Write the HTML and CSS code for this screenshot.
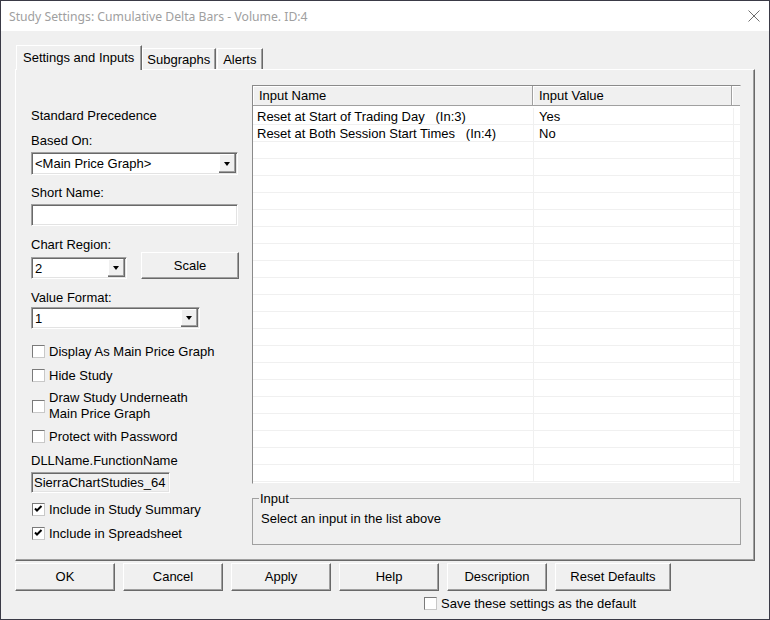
FILE: index.html
```html
<!DOCTYPE html>
<html lang="en">
<head>
  <meta charset="UTF-8">
  <meta name="viewport" content="width=device-width, initial-scale=1.0">
  <title>Study Settings</title>
  <link rel="stylesheet" href="styles.css">
</head>
<body>

<div class="window">
  <div class="titlebar">
    <span class="title">Study Settings: Cumulative Delta Bars - Volume. ID:4</span>
    <svg class="close" width="12" height="12" viewBox="0 0 12 12" aria-label="Close">
      <path d="M0.5 0.5L11.5 11.5M11.5 0.5L0.5 11.5" stroke="#6e6e6e" stroke-width="1" fill="none"/>
    </svg>
  </div>

  <div class="tabs">
    <div class="tab active">Settings and Inputs</div>
    <div class="tab">Subgraphs</div>
    <div class="tab last">Alerts</div>
  </div>

  <div class="panel">
    <div class="left">
      <div class="text">Standard Precedence</div>

      <div class="text label">Based On:</div>
      <div class="combo based">
        <span class="combo-text">&lt;Main Price Graph&gt;</span>
        <span class="combo-btn"><span class="arrow"></span></span>
      </div>

      <div class="text label">Short Name:</div>
      <div class="edit"></div>

      <div class="text label">Chart Region:</div>
      <div class="region-row">
        <div class="combo region">
          <span class="combo-text">2</span>
          <span class="combo-btn"><span class="arrow"></span></span>
        </div>
        <button class="btn scale">Scale</button>
      </div>

      <div class="text label label-wide">Value Format:</div>
      <div class="combo format">
        <span class="combo-text">1</span>
        <span class="combo-btn"><span class="arrow"></span></span>
      </div>

      <label class="check first"><span class="box"></span>Display As Main Price Graph</label>
      <label class="check"><span class="box"></span>Hide Study</label>
      <label class="check two-line"><span class="box"></span><span>Draw Study Underneath<br>Main Price Graph</span></label>
      <label class="check protect"><span class="box"></span>Protect with Password</label>

      <div class="text label dll">DLLName.FunctionName</div>
      <div class="edit readonly">SierraChartStudies_64</div>

      <label class="check">
        <span class="box"><svg width="11" height="11" viewBox="0 0 11 11"><path d="M2 4.5L4 6.5L8.5 2" stroke="#000" stroke-width="2" fill="none"/></svg></span>Include in Study Summary
      </label>
      <label class="check">
        <span class="box"><svg width="11" height="11" viewBox="0 0 11 11"><path d="M2 4.5L4 6.5L8.5 2" stroke="#000" stroke-width="2" fill="none"/></svg></span>Include in Spreadsheet
      </label>
    </div>

    <div class="right">
      <div class="list">
        <div class="list-head">
          <div class="hcell h-name">Input Name</div>
          <div class="hcell h-value">Input Value</div>
          <div class="hcell h-fill"></div>
        </div>
        <div class="rows">
          <div class="row"><div class="c-name">Reset at Start of Trading Day   (In:3)</div><div class="c-value">Yes</div></div>
          <div class="row"><div class="c-name">Reset at Both Session Start Times   (In:4)</div><div class="c-value">No</div></div>
          <div class="row"><div class="c-name"></div><div class="c-value"></div></div>
          <div class="row"><div class="c-name"></div><div class="c-value"></div></div>
          <div class="row"><div class="c-name"></div><div class="c-value"></div></div>
          <div class="row"><div class="c-name"></div><div class="c-value"></div></div>
          <div class="row"><div class="c-name"></div><div class="c-value"></div></div>
          <div class="row"><div class="c-name"></div><div class="c-value"></div></div>
          <div class="row"><div class="c-name"></div><div class="c-value"></div></div>
          <div class="row"><div class="c-name"></div><div class="c-value"></div></div>
          <div class="row"><div class="c-name"></div><div class="c-value"></div></div>
          <div class="row"><div class="c-name"></div><div class="c-value"></div></div>
          <div class="row"><div class="c-name"></div><div class="c-value"></div></div>
          <div class="row"><div class="c-name"></div><div class="c-value"></div></div>
          <div class="row"><div class="c-name"></div><div class="c-value"></div></div>
          <div class="row"><div class="c-name"></div><div class="c-value"></div></div>
          <div class="row"><div class="c-name"></div><div class="c-value"></div></div>
          <div class="row"><div class="c-name"></div><div class="c-value"></div></div>
          <div class="row"><div class="c-name"></div><div class="c-value"></div></div>
          <div class="row"><div class="c-name"></div><div class="c-value"></div></div>
          <div class="row"><div class="c-name"></div><div class="c-value"></div></div>
          <div class="row"><div class="c-name"></div><div class="c-value"></div></div>
        </div>
      </div>

      <fieldset class="group">
        <legend>Input</legend>
        <div>Select an input in the list above</div>
      </fieldset>
    </div>
  </div>

  <div class="buttons">
    <button class="btn">OK</button>
    <button class="btn">Cancel</button>
    <button class="btn">Apply</button>
    <button class="btn">Help</button>
    <button class="btn">Description</button>
    <button class="btn reset">Reset Defaults</button>
  </div>

  <label class="check save"><span class="box"></span>Save these settings as the default</label>
</div>

</body>
</html>
```

FILE: styles.css
```css
body {
  margin: 0;
  background-color: #f0f0f0;
  font-family: "Liberation Sans", Arial, sans-serif;
  font-size: 13px;
  line-height: 15px;
  color: #000;
}
.window {
  width: 770px;
  height: 620px;
  box-sizing: border-box;
  border: 1px solid #3a3a46;
  background-color: #f0f0f0;
  overflow: hidden;
}
.titlebar {
  height: 30px;
  background-color: #fff;
  display: flex;
  align-items: center;
  padding: 0 9px 0 8px;
}
.title {
  flex: 1;
  font-family: "Noto Sans", sans-serif;
  font-size: 12.2px;
  color: #a0a0a0;
}

/* tabs */
.tabs {
  display: flex;
  align-items: flex-end;
  height: 24px;
  margin: 14px 0 0 15px;
}
.tab {
  height: 20px;
  line-height: 21px;
  padding: 0 5px 0 4px;
  border: 1px solid;
  border-color: #fff #696969 transparent #fff;
  border-bottom: none;
  box-shadow: inset -1px 0 0 #a0a0a0;
}
.tab.last {
  margin-left: 1px;
  padding: 0 6px 0 5px;
}
.tab.active {
  position: relative;
  z-index: 1;
  height: 24px;
  line-height: 23px;
  padding: 0 7px 0 6px;
  margin-bottom: -1px;
  background-color: #f0f0f0;
}

/* main panel */
.panel {
  display: flex;
  width: 740px;
  height: 492px;
  box-sizing: border-box;
  margin-left: 14px;
  padding: 0 13px 0 15px;
  border: 1px solid;
  border-color: #fff #696969 #696969 #fff;
  box-shadow: inset -1px -1px 0 #a0a0a0;
}
.left {
  width: 208px;
  padding-top: 38px;
}
.right {
  width: 489px;
  margin-left: 13px;
  padding-top: 15px;
}

.label {
  margin-top: 10px;
}
.label + .edit,
.label + .combo {
  margin-top: 4px;
}
.combo + .label {
  margin-top: 10px;
}
.edit + .label {
  margin-top: 11px;
}
.label-wide {
  margin-top: 11px;
}
.label-wide + .combo {
  margin-top: 2px;
}

/* sunken controls */
.combo,
.edit {
  box-sizing: border-box;
  background-color: #fff;
  border: 1px solid;
  border-color: #a0a0a0 #fff #fff #a0a0a0;
  box-shadow: inset 1px 1px 0 #696969, inset -1px -1px 0 #e3e3e3;
}
.combo {
  display: flex;
  align-items: center;
  height: 22px;
}
.combo.based {
  width: 207px;
  height: 23px;
}
.combo.region {
  width: 96px;
}
.combo.format {
  width: 169px;
}
.combo-text {
  flex: 1;
  padding-left: 3px;
}
.combo-btn {
  align-self: stretch;
  width: 16px;
  margin: 1px 1px 1px 0;
  display: flex;
  align-items: center;
  justify-content: center;
  background-color: #f0f0f0;
  border-right: 1px solid #696969;
  border-bottom: 1px solid #696969;
  box-shadow: inset -1px -1px 0 #a0a0a0, inset 1px 1px 0 #fff;
}
.arrow {
  width: 0;
  height: 0;
  border-left: 3.5px solid transparent;
  border-right: 3.5px solid transparent;
  border-top: 4px solid #000;
  margin-top: 1px;
}
.edit {
  width: 207px;
  height: 22px;
}
.edit.readonly {
  width: 139px;
  height: 21px;
  background-color: #f0f0f0;
  padding-left: 2px;
  line-height: 19px;
  white-space: nowrap;
  overflow: hidden;
}
.label.dll {
  margin-top: 9px;
}

.region-row {
  display: flex;
  align-items: flex-end;
  justify-content: space-between;
  width: 208px;
}

/* raised buttons */
.btn {
  font-family: inherit;
  font-size: inherit;
  color: #000;
  width: 100px;
  height: 28px;
  padding: 0 0 1px;
  background-color: #f0f0f0;
  border: 1px solid;
  border-color: #fff #696969 #696969 #fff;
  box-shadow: inset -1px -1px 0 #a0a0a0;
}
.btn.scale {
  width: 98px;
  height: 27px;
}
.btn.reset {
  width: 116px;
}

/* checkboxes */
.check {
  display: flex;
  align-items: center;
  gap: 4px;
  margin-top: 9px;
  white-space: nowrap;
}
.check.first {
  margin-top: 15px;
}
.check.two-line {
  margin-top: 7px;
  line-height: 16px;
}
.check.protect {
  margin-top: 7px;
}
.box {
  flex: none;
  width: 13px;
  height: 13px;
  box-sizing: border-box;
  margin-left: 1px;
  background-color: #fff;
  border: 1px solid;
  border-color: #7a7a7a #c8c8c8 #c8c8c8 #7a7a7a;
  display: flex;
  align-items: center;
  justify-content: center;
}

/* input list */
.list {
  height: 399px;
  box-sizing: border-box;
  background-color: #fff;
  border: 1px solid;
  border-color: #8a8a8a #f0f0f0 #f0f0f0 #8a8a8a;
  overflow: hidden;
}
.list-head {
  display: flex;
  height: 20px;
  background-color: #f0f0f0;
  border-bottom: 1px solid #a0a0a0;
  box-sizing: border-box;
}
.hcell {
  box-sizing: border-box;
  line-height: 20px;
  border-right: 1px solid #a0a0a0;
  box-shadow: inset 1px 1px 0 #fff;
  white-space: nowrap;
}
.h-name {
  width: 280px;
  padding-left: 6px;
}
.h-value {
  width: 199px;
  padding-left: 6px;
}
.h-fill {
  flex: 1;
  border-right: none;
}
.rows {
  margin-top: 2px;
}
.row {
  display: flex;
  height: 17px;
  box-sizing: border-box;
  line-height: 17px;
  border-bottom: 1px solid #f0f0f0;
  white-space: pre;
}
.c-name {
  width: 281px;
  box-sizing: border-box;
  padding-left: 4px;
  border-right: 1px solid #f0f0f0;
}
.c-value {
  width: 200px;
  box-sizing: border-box;
  padding-left: 5px;
  border-right: 1px solid #f0f0f0;
}

.group {
  margin: 7px 0 0 0;
  padding: 5px 8px 18px 8px;
  border: 1px solid #a0a0a0;
  min-inline-size: 0;
}
.group legend {
  padding: 0 1px;
  margin-left: -2px;
}

/* bottom */
.buttons {
  display: flex;
  gap: 8px;
  margin: 2px 0 0 14px;
}
.check.save {
  margin: 5px 0 0 422px;
}
```
